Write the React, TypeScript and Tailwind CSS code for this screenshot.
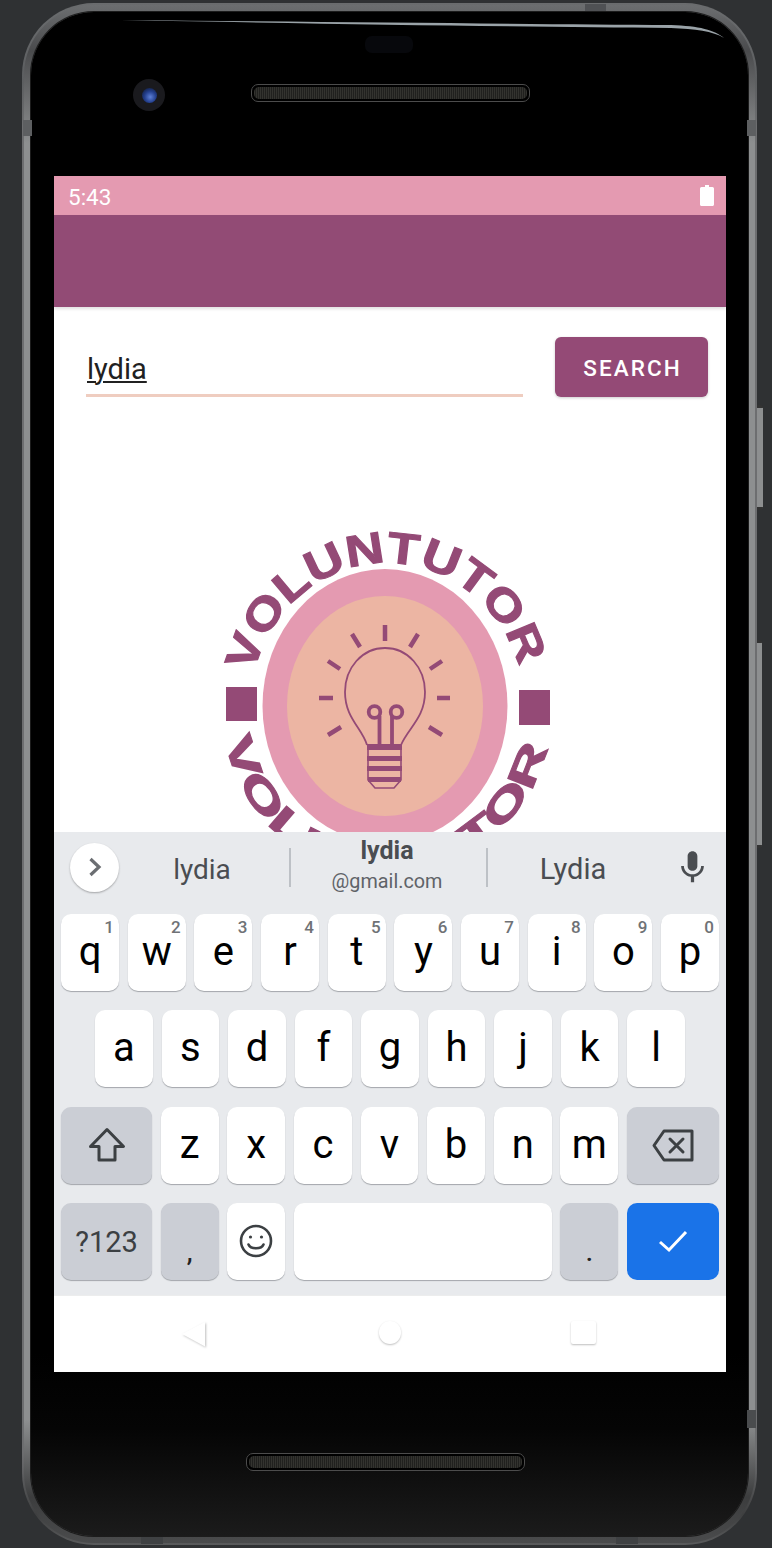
import React from "react";

const font = { fontFamily: "Roboto, 'Liberation Sans', sans-serif" };

function Key({ label, num, className = "" }: { label: string; num?: string; className?: string }) {
  return (
    <div className={`relative flex-1 h-[77px] rounded-[10px] bg-white shadow-[0_1px_1px_#a3a6ab] flex items-center justify-center text-[40px] leading-none text-black pb-[1px] ${className}`}>
      {label}
      {num && <span className="absolute top-[3px] right-[5px] text-[17px] leading-[20px] font-medium text-[#6f7276]">{num}</span>}
    </div>
  );
}

function Logo() {
  const purple = "#944a76";
  return (
    <svg width="340" height="325" viewBox="215 525 340 325" className="block ml-[161px] mt-[128px] shrink-0">
      <defs>
        <path id="arcTop" d="M254 673A137 143 0 0 1 387 563A137 143 0 0 1 520 740" />
        <path id="arcBottom" d="M225 740A165 170 0 0 0 387 876A165 170 0 0 0 552 706" />
      </defs>
      <ellipse cx="385" cy="706" rx="122.5" ry="137" fill="#e49ab1" />
      <ellipse cx="385" cy="706" rx="98" ry="110" fill="#ecb5a3" />
      <rect x="226" y="687" width="31" height="34" fill={purple} />
      <rect x="519" y="690" width="31" height="35" fill={purple} />
      <text fontFamily="'Liberation Sans', sans-serif" fontWeight="700" fontSize="44" fill={purple} stroke={purple} strokeWidth="1.1">
        <textPath href="#arcTop" textLength="366" lengthAdjust="spacingAndGlyphs">VOLUNTUTOR</textPath>
      </text>
      <text fontFamily="'Liberation Sans', sans-serif" fontWeight="700" fontSize="39" fill={purple} stroke={purple} strokeWidth="1.1">
        <textPath href="#arcBottom" textLength="450" lengthAdjust="spacingAndGlyphs">VOLUNTUTOR</textPath>
      </text>
      {/* rays */}
      <g stroke={purple} strokeWidth="4.5" fill="none">
        <path d="M385 625V641M352 634L360 647M418 634L410 647M328 661L340 669M442 661L430 669M319 698H333M437 698H450M328 735L341 727M442 735L429 727" />
      </g>
      {/* bulb */}
      <path d="M367 745C362 728 345 718 345 692C345 668 362 648 385 648C408 648 425 668 425 692C425 718 408 728 401 745" fill="none" stroke={purple} strokeWidth="1.8" />
      <g fill="none" stroke={purple} strokeWidth="3.8">
        <circle cx="374.5" cy="712" r="5.8" />
        <circle cx="396.5" cy="712" r="5.8" />
        <path d="M379.5 716V745M392 716V745" />
      </g>
      <path d="M368 745H401V780L394 788H375L368 780Z" fill="none" stroke={purple} strokeWidth="1.6" />
      <g fill={purple}>
        <rect x="367" y="744" width="35" height="6" />
        <rect x="367" y="756" width="35" height="5" />
        <rect x="367" y="766" width="35" height="5" />
        <rect x="368" y="777" width="33" height="5" />
      </g>
    </svg>
  );
}

function Shift() {
  return (
    <svg width="38" height="36" viewBox="0 0 38 36" fill="none" stroke="#3c4043" strokeWidth="3" strokeLinejoin="round">
      <path d="M19 2.5L35.5 19.5H27V33H11V19.5H2.5Z" />
    </svg>
  );
}
function Backspace() {
  return (
    <svg width="42" height="33" viewBox="0 0 42 33" fill="none" stroke="#3c4043" strokeWidth="3" strokeLinejoin="round" strokeLinecap="round">
      <path d="M12 2H40V31H12L2 16.5Z" />
      <path d="M18 10L31 23M31 10L18 23" />
    </svg>
  );
}
function Smile() {
  return (
    <svg width="34" height="34" viewBox="0 0 34 34" fill="none" stroke="#3c4043" strokeWidth="2.6" strokeLinecap="round">
      <circle cx="17" cy="17" r="15" />
      <path d="M9.5 20.5C11.5 25.5 22.5 25.5 24.5 20.5" />
      <circle cx="11.5" cy="13" r="1.6" fill="#3c4043" stroke="none" />
      <circle cx="22.5" cy="13" r="1.6" fill="#3c4043" stroke="none" />
    </svg>
  );
}

function Speaker({ className = "" }: { className?: string }) {
  return (
    <div className={`h-[18px] w-[279px] rounded-[7px] border border-[#4c4c4c] bg-black p-[2px] ${className}`}>
      <div className="h-full w-full rounded-[5px] bg-[repeating-linear-gradient(90deg,#33332f_0,#33332f_1px,#20201e_1px,#20201e_2px)]" />
    </div>
  );
}

export default function App() {
  return (
    <div className="relative w-[772px] h-[1548px] overflow-hidden bg-[#2f3133] pt-[3px] pl-[22px]" style={font}>
      {/* side buttons */}
      <div className="absolute left-[756px] top-[405px] w-[7px] h-[105px] rounded-r-[3px] bg-[#8d8f90] border-y-[3px] border-[#333]" />
      <div className="absolute left-[756px] top-[640px] w-[6px] h-[208px] rounded-r-[3px] bg-[#8d8f90] border-y-[3px] border-[#333]" />

      {/* phone rim */}
      <div className="relative w-[735px] h-[1542px] rounded-[72px] bg-[linear-gradient(180deg,#6a6c6e_0%,#5c5e60_5%,#6d6e70_8%,#6d6e70_94%,#3e3f40_98%,#5a5b5c_100%)] p-[2px]">
        <div className="h-full w-full rounded-[70px] bg-[linear-gradient(180deg,#6c6e70_0%,#4a4b4d_3%,#8d8f90_9%,#8d8f90_92%,#3c3d3e_97%,#4a4b4c_100%)] p-[7px]">
          <div className="relative flex h-full w-full flex-col rounded-[63px] bg-[linear-gradient(180deg,#000_0%,#000_88%,#050505_93%,#1b1b1b_100%)] px-[23px] pt-[164px] shadow-[0_0_0_1px_#1c1c1c]">
            {/* top bezel parts */}
            <div className="absolute left-[102px] top-[67px] flex h-[32px] w-[32px] items-center justify-center rounded-full bg-[#1a1a1e]">
              <div className="h-[15px] w-[15px] rounded-full bg-[radial-gradient(circle_at_55%_60%,#5d7fd6_0%,#24408f_45%,#0a1020_100%)]" />
            </div>
            <div className="absolute left-[334px] top-[24px] h-[17px] w-[48px] rounded-[7px] bg-[#07080c]" />
            <Speaker className="absolute left-[220px] top-[72px]" />
            <svg className="absolute left-0 top-[-2px]" width="704" height="60" viewBox="0 0 704 60" fill="none">
              <path d="M90 10C300 12 500 14 640 15C668 16 684 20 693 28C682 21 664 19 640 18C500 17 300 14 90 10Z" fill="#9aa3a8" />
            </svg>

            {/* screen */}
            <div className="flex h-[1196px] w-[672px] flex-col overflow-hidden bg-white">
              <div className="flex h-[39px] shrink-0 items-center justify-between bg-[#e49ab1] pl-[14px] pr-[12px] text-white">
                <span className="pt-[3px] text-[22.5px] leading-none">5:43</span>
                <svg width="14" height="21" viewBox="0 0 14 20" preserveAspectRatio="none" fill="#fff">
                  <path d="M5 0H9V2H12.5C13.3 2 14 2.7 14 3.5V18.5C14 19.3 13.3 20 12.5 20H1.5C.7 20 0 19.3 0 18.5V3.5C0 2.7.7 2 1.5 2H5Z" />
                </svg>
              </div>
              <div className="relative z-10 h-[92px] shrink-0 bg-[#924b75] shadow-[0_2px_3px_rgba(0,0,0,0.12)]" />

              <div className="flex h-[525px] shrink-0 flex-col overflow-hidden">
                <div className="flex shrink-0 items-start pt-[30px] pl-[32px]">
                  <div className="h-[60px] w-[437px] border-b-[3px] border-[#efcdc0] pl-[1px] pt-[14px] text-[29px] leading-[36px] text-[#212121]">
                    <span className="underline decoration-[2px] underline-offset-[2px]">lydia</span>
                  </div>
                  <div className="ml-[32px] flex h-[60px] w-[153px] items-center justify-center rounded-[6px] bg-[#944a76] pl-[2px] pt-[3px] text-[22.5px] font-medium tracking-[2.1px] text-white shadow-[0_1px_3px_rgba(0,0,0,0.2)]">
                    SEARCH
                  </div>
                </div>
                <Logo />
              </div>

              {/* keyboard */}
              <div className="flex h-[463px] shrink-0 flex-col bg-[#e8eaed] px-[7px]">
                <div className="mb-[12px] flex h-[70px] shrink-0 items-center text-[#3c4043]">
                  <div className="ml-[9px] flex h-[49px] w-[49px] shrink-0 items-center justify-center rounded-full bg-white shadow-[0_1px_2px_rgba(0,0,0,0.3)]">
                    <svg width="14" height="20" viewBox="0 0 14 20" fill="none" stroke="#6b6e72" strokeWidth="3.2">
                      <path d="M2.5 2L11 10L2.5 18" />
                    </svg>
                  </div>
                  <div className="flex h-[45px] w-[170px] items-center justify-center pr-[4px] pt-[5px] text-[28px] leading-none text-[#4a4d51]">lydia</div>
                  <div className="h-[39px] w-[2px] shrink-0 bg-[#bdc1c6]" />
                  <div className="mb-[2px] flex w-[195px] flex-col items-center gap-[7px] pr-[3px]">
                    <span className="text-[25px] font-bold leading-[24px] text-[#4a4d51]">lydia</span>
                    <span className="text-[19.8px] leading-[24px] text-[#5f6368]">@gmail.com</span>
                  </div>
                  <div className="h-[39px] w-[2px] shrink-0 bg-[#bdc1c6]" />
                  <div className="flex h-[45px] w-[172px] items-center justify-center pr-[2px] pt-[5px] text-[29px] leading-none text-[#4a4d51]">Lydia</div>
                  <svg width="39" height="39" viewBox="0 0 24 24" fill="#4a4d51" className="ml-[13px] shrink-0">
                    <path d="M12 14c1.66 0 2.99-1.34 2.99-3L15 5c0-1.66-1.34-3-3-3S9 3.34 9 5v6c0 1.66 1.34 3 3 3zm5.3-3c0 3-2.54 5.1-5.3 5.1S6.7 14 6.7 11H5c0 3.41 2.72 6.23 6 6.72V21h2v-3.28c3.28-.48 6-3.3 6-6.72h-1.7z" />
                  </svg>
                </div>
                <div className="flex flex-col gap-[19.3px]">
                  <div className="flex gap-[8.7px]">
                    {["q", "w", "e", "r", "t", "y", "u", "i", "o", "p"].map((k, i) => (
                      <Key key={k} label={k} num={String((i + 1) % 10)} />
                    ))}
                  </div>
                  <div className="flex gap-[8.7px] px-[34px]">
                    {["a", "s", "d", "f", "g", "h", "j", "k", "l"].map((k) => (
                      <Key key={k} label={k} />
                    ))}
                  </div>
                  <div className="flex gap-[8.7px]">
                    <div className="flex h-[77px] w-[91px] shrink-0 items-center justify-center rounded-[10px] bg-[#cbced5] shadow-[0_1px_1px_#a3a6ab]">
                      <Shift />
                    </div>
                    {["z", "x", "c", "v", "b", "n", "m"].map((k) => (
                      <Key key={k} label={k} />
                    ))}
                    <div className="flex h-[77px] w-[92px] shrink-0 items-center justify-center rounded-[10px] bg-[#cbced5] shadow-[0_1px_1px_#a3a6ab]">
                      <Backspace />
                    </div>
                  </div>
                  <div className="flex gap-[8.7px]">
                    <div className="flex h-[77px] w-[91px] shrink-0 items-center justify-center rounded-[10px] bg-[#cbced5] pt-[3px] text-[29px] text-[#3c4043] shadow-[0_1px_1px_#a3a6ab]">?123</div>
                    <div className="flex h-[77px] w-[58px] shrink-0 items-center justify-center rounded-[10px] bg-[#cbced5] pt-[22px] text-[26px] font-medium leading-none text-[#222] shadow-[0_1px_1px_#a3a6ab]">,</div>
                    <div className="flex h-[77px] w-[58px] shrink-0 items-center justify-center rounded-[10px] bg-white shadow-[0_1px_1px_#a3a6ab]">
                      <Smile />
                    </div>
                    <div className="h-[77px] flex-1 rounded-[10px] bg-white shadow-[0_1px_1px_#a3a6ab]" />
                    <div className="flex h-[77px] w-[58px] shrink-0 items-center justify-center rounded-[10px] bg-[#cbced5] pt-[22px] text-[26px] font-medium leading-none text-[#222] shadow-[0_1px_1px_#a3a6ab]">.</div>
                    <div className="flex h-[77px] w-[92px] shrink-0 items-center justify-center rounded-[10px] bg-[#1a73e8]">
                      <svg width="30" height="24" viewBox="0 0 30 24" fill="none" stroke="#fff" strokeWidth="3">
                        <path d="M2 13L11 21L28 3" />
                      </svg>
                    </div>
                  </div>
                </div>
              </div>

              {/* nav bar */}
              <div className="flex h-[77px] shrink-0 items-start border-t border-[#eceded] bg-white pl-[127px] pt-[25px]">
                <svg width="26" height="28" viewBox="0 0 26 28" className="drop-shadow-[1px_1px_1px_rgba(0,0,0,0.25)]">
                  <path d="M24 1V25.5L1 13Z" fill="#fff" />
                </svg>
                <div className="ml-[172px] h-[23px] w-[22px] rounded-full bg-white shadow-[0_1px_2px_rgba(0,0,0,0.25)]" />
                <div className="ml-[170px] h-[23px] w-[25px] rounded-[2px] bg-white shadow-[0_1px_2px_rgba(0,0,0,0.25)]" />
              </div>
            </div>

            {/* bottom bezel */}
            <div className="flex flex-1 justify-center pt-[81px] pr-[8px]">
              <Speaker />
            </div>
          </div>
        </div>
      </div>

      {/* rim seams */}
      <div className="absolute left-[23px] top-[120px] h-[16px] w-[9px] bg-[#5d5f61]" />
      <div className="absolute left-[747px] top-[120px] h-[16px] w-[9px] bg-[#5d5f61]" />
      <div className="absolute left-[747px] top-[1410px] h-[18px] w-[9px] bg-[#4a4c4e]" />
      <div className="absolute left-[585px] top-[4px] h-[7px] w-[21px] bg-[#4f5154]" />
      <div className="absolute left-[141px] top-[1537px] h-[7px] w-[22px] bg-[#3f4143]" />
      <div className="absolute left-[616px] top-[1537px] h-[7px] w-[22px] bg-[#3f4143]" />
    </div>
  );
}
